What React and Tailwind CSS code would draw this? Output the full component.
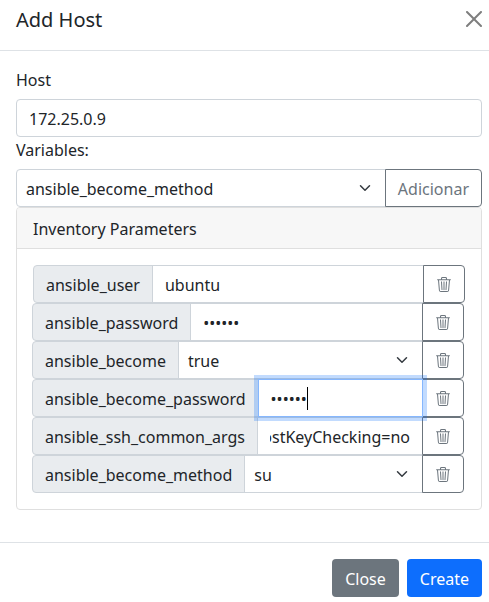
import React from "react";
import { BsTrash3 } from "react-icons/bs";

const rows = [
  { name: "ansible_user", value: "ubuntu", kind: "text" },
  { name: "ansible_password", value: "••••••", kind: "text" },
  { name: "ansible_become", value: "true", kind: "select" },
  { name: "ansible_become_password", value: "••••••", kind: "focused" },
  { name: "ansible_ssh_common_args", value: "ostKeyChecking=no", kind: "overflow" },
  { name: "ansible_become_method", value: "su", kind: "select" },
];

function Chevron() {
  return (
    <svg className="h-3 w-4 shrink-0" viewBox="0 0 16 16" fill="none" stroke="#343a40" strokeWidth="2" strokeLinecap="round" strokeLinejoin="round">
      <path d="m2 5 6 6 6-6" />
    </svg>
  );
}

function Field({ kind, value }) {
  if (kind === "select") {
    return (
      <div className="-ml-px flex min-w-0 flex-1 items-center justify-between border border-[#ced4da] bg-white pr-3 pl-[9px]">
        <span className="pt-0.5">{value}</span>
        <Chevron />
      </div>
    );
  }
  if (kind === "focused") {
    return (
      <div className="z-10 -ml-px flex min-w-0 flex-1 items-center border border-[#86b7fe] bg-white px-3 shadow-[0_0_0_4px_rgba(13,110,253,0.25)]">
        <span className="pt-0.5">{value}</span>
        <span className="mt-px h-[23px] w-px bg-black" />
      </div>
    );
  }
  if (kind === "overflow") {
    return (
      <div className="-ml-px flex min-w-0 flex-1 items-center border border-[#ced4da] bg-white px-3">
        <div className="flex min-w-0 flex-1 justify-end overflow-hidden pt-0.5 whitespace-nowrap">
          <span>{value}</span>
        </div>
      </div>
    );
  }
  return (
    <div className="-ml-px flex min-w-0 flex-1 items-center border border-[#ced4da] bg-white px-3">
      <span className="pt-0.5">{value}</span>
    </div>
  );
}

function ParameterRow({ name, value, kind, first }) {
  return (
    <div className={first ? "flex h-[38px] w-[432px]" : "-ml-px flex h-[38px] w-[432px]"}>
      <span className="flex shrink-0 items-center rounded-l border border-[#ced4da] bg-[#e9ecef] px-3 pt-0.5">{name}</span>
      <Field kind={kind} value={value} />
      <button className="-ml-px flex w-[42px] shrink-0 items-center justify-center rounded-r border border-[#6c757d] bg-white pt-px text-[#6c757d]">
        <BsTrash3 className="h-[15px] w-4" preserveAspectRatio="none" />
      </button>
    </div>
  );
}

export default function App() {
  return (
    <div className="h-[602px] w-[489px] overflow-hidden bg-white font-['Noto_Sans',sans-serif] text-base leading-6 text-[#212529]">
      <header className="flex h-[51px] items-start justify-between border-b border-[#dee2e6] pr-[7px] pl-4">
        <h5 className="pt-[5px] text-xl leading-[30px]">Add Host</h5>
        <button aria-label="Close" className="pt-[11px] opacity-50">
          <svg className="h-4 w-4" viewBox="0 0 16 16" fill="#000">
            <path d="M.293.293a1 1 0 0 1 1.414 0L8 6.586 14.293.293a1 1 0 1 1 1.414 1.414L9.414 8l6.293 6.293a1 1 0 0 1-1.414 1.414L8 9.414l-6.293 6.293a1 1 0 0 1-1.414-1.414L6.586 8 .293 1.707a1 1 0 0 1 0-1.414z" />
          </svg>
        </button>
      </header>

      <main className="w-[482px] pt-4 pl-4">
        <label className="block h-8 pt-px">Host</label>
        <div className="flex h-[38px] items-center rounded border border-[#ced4da] px-3 pt-0.5">172.25.0.9</div>
        <label className="block h-8 pt-px">Variables:</label>
        <div className="flex h-[38px]">
          <div className="flex flex-1 items-center justify-between rounded-l border border-[#ced4da] pr-3 pl-[9px]">
            <span className="pt-0.5">ansible_become_method</span>
            <Chevron />
          </div>
          <button className="-ml-px rounded-r border border-[#6c757d] bg-white px-3 pt-0.5 text-[#6c757d]">Adicionar</button>
        </div>

        <section className="h-[303px] rounded border border-[#dfdfdf]">
          <h6 className="h-[41px] rounded-t-[3px] border-b border-[#dfdfdf] bg-[#f7f7f7] px-4 pt-[9px]">Inventory Parameters</h6>
          <div className="p-4">
            {rows.map((row, i) => (
              <ParameterRow key={row.name} {...row} first={i === 0} />
            ))}
          </div>
        </section>
      </main>

      <footer className="mt-8 flex w-full justify-end gap-2 border-t border-[#dee2e6] pt-4 pr-[7px]">
        <button className="h-[38px] rounded bg-[#6c757d] px-[13px] pt-0.5 text-white">Close</button>
        <button className="h-[38px] rounded bg-[#0d6efd] px-[13px] pt-0.5 text-white">Create</button>
      </footer>
    </div>
  );
}
